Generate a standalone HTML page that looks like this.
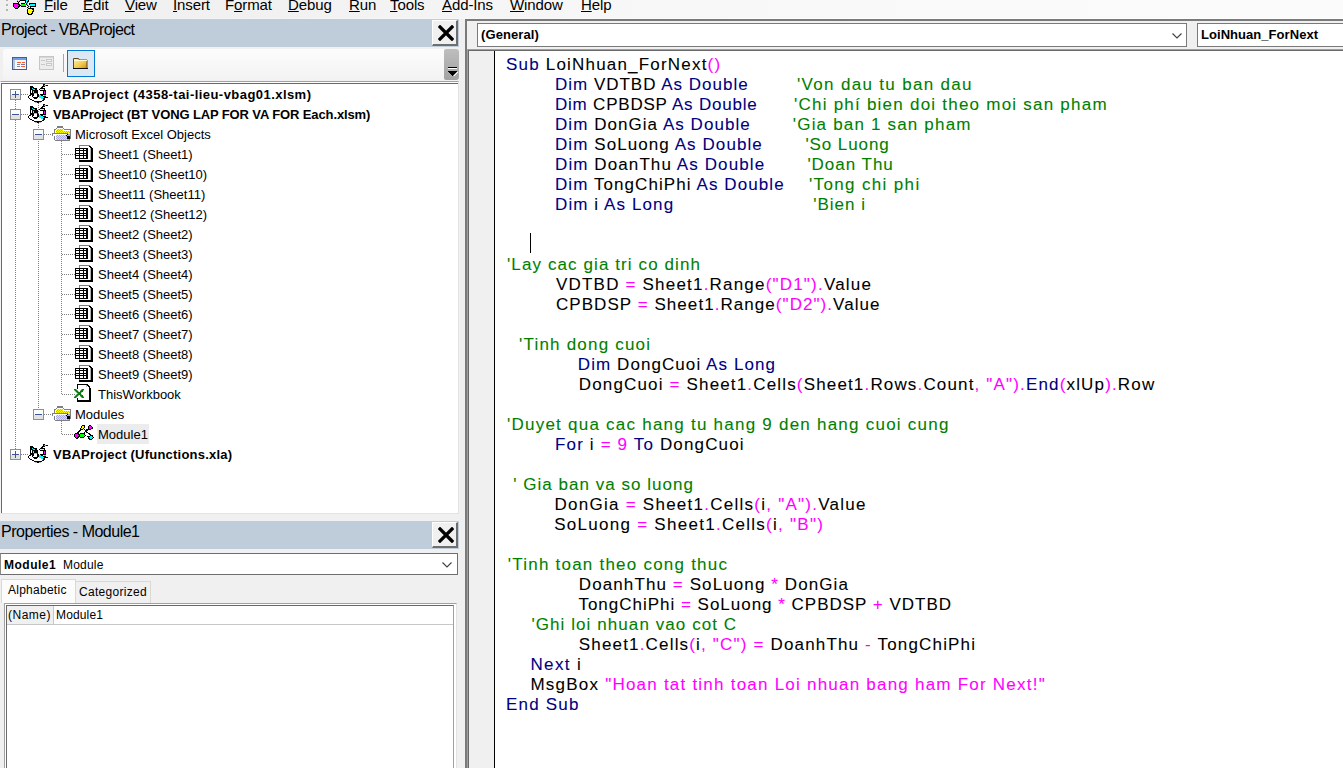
<!DOCTYPE html>
<html><head><meta charset="utf-8">
<style>
*{margin:0;padding:0;box-sizing:border-box}
html,body{width:1343px;height:768px;overflow:hidden;background:#f0f0f0;font-family:"Liberation Sans",sans-serif;color:#000}
.a{position:absolute}
svg{display:block}
.t{position:absolute;white-space:pre;line-height:1}
/* menu */
.mi{position:absolute;top:-4px;font-size:15px;letter-spacing:-0.1px;white-space:pre;line-height:18px}
.mi u{text-decoration:underline;text-decoration-thickness:1px;text-underline-offset:1px}
.cap{position:absolute;background:#bfcddb;left:0;width:459px;height:28px}
.capt{position:absolute;left:1px;font-size:16px;letter-spacing:-0.62px;white-space:pre;line-height:1}
.xbtn{position:absolute;left:432px;width:26px;height:26px;background:#f0f0f0;border-left:1px solid #fff;border-top:1px solid #fff;border-right:2px solid #6f6f6f;border-bottom:2px solid #6f6f6f}
.xbtn svg{position:absolute;left:5px;top:4px}
.r{position:absolute;white-space:pre;font-size:13px;letter-spacing:0;line-height:1}
.r.b{font-weight:bold;font-size:13px;margin-left:1px}
.code{position:absolute;left:0;top:0}
.cl{position:absolute;white-space:pre;font-size:17px;letter-spacing:1.1px;line-height:1;color:#000;-webkit-text-stroke:0.08px currentColor}
.k{color:#000080}
.p{color:#ff00ff}
.c{color:#008000}
</style></head><body>

<!-- MENU BAR -->
<div class="a" style="left:0;top:0;width:1343px;height:18px;background:linear-gradient(90deg,#f0f0f0 0px,#f1f1f1 250px,#f7f7f7 600px,#fafafa 1000px,#fbfbfb 1343px)"></div>
<div class="a" style="left:0;top:18px;width:1343px;height:1px;background:linear-gradient(90deg,#f0f0f0 0px,#f8f8f8 500px,#fff 900px)"></div>
<div class="a" style="left:6px;top:-1px;width:2px;height:2px;background:#b4b4b4"></div>
<div class="a" style="left:6px;top:4px;width:2px;height:2px;background:#b4b4b4"></div>
<div class="a" style="left:6px;top:9px;width:2px;height:2px;background:#b4b4b4"></div>
<svg class="a" style="left:13px;top:0px" width="23" height="15" shape-rendering="crispEdges"><path d="M4 0h1v1h-1zM6 0h1v1h-1zM13 0h2v1h-2zM5 1h1v1h-1zM13 1h1v1h-1zM13 2h1v1h-1zM14 3h1v1h-1zM14 4h1v1h-1zM17 4h5v1h-5zM15 5h1v1h-1zM17 5h5v1h-5zM16 6h1v1h-1zM15 7h1v1h-1z" fill="#00ffff"/><path d="M5 0h1v1h-1zM7 1h5v1h-5zM15 4h1v1h-1zM13 5h1v1h-1zM16 5h1v1h-1zM14 6h1v1h-1zM16 7h1v1h-1z" fill="#fff"/><path d="M7 0h6v1h-6zM15 0h1v1h-1zM4 1h1v1h-1zM6 1h1v1h-1zM12 1h1v1h-1zM14 1h2v1h-2zM5 2h1v1h-1zM12 2h1v1h-1zM14 2h1v1h-1zM0 3h6v1h-6zM8 3h4v1h-4zM13 3h1v1h-1zM16 3h7v1h-7zM0 4h1v1h-1zM5 4h2v1h-2zM13 4h1v1h-1zM16 4h1v1h-1zM22 4h1v1h-1zM0 5h1v1h-1zM6 5h2v1h-2zM14 5h1v1h-1zM22 5h1v1h-1zM0 6h1v1h-1zM5 6h2v1h-2zM8 6h5v1h-5zM15 6h1v1h-1zM17 6h6v1h-6zM1 7h1v1h-1zM5 7h1v1h-1zM14 7h1v1h-1zM17 7h1v1h-1zM2 8h3v1h-3zM15 8h6v1h-6zM14 9h1v1h-1zM19 9h2v1h-2zM14 10h1v1h-1zM20 10h1v1h-1zM14 11h1v1h-1zM19 11h2v1h-2zM14 12h1v1h-1zM19 12h1v1h-1zM14 13h2v1h-2zM18 13h2v1h-2zM15 14h4v1h-4z" fill="#000"/><path d="M1 4h4v1h-4zM1 5h5v1h-5zM1 6h4v1h-4zM2 7h3v1h-3z" fill="#ff00ff"/><path d="M8 4h5v1h-5zM8 5h5v1h-5z" fill="#00ff00"/><path d="M15 9h4v1h-4zM15 10h5v1h-5zM15 11h4v1h-4zM15 12h4v1h-4zM16 13h2v1h-2z" fill="#ffff00"/></svg>
<div class="mi" style="left:44px"><u>F</u>ile</div>
<div class="mi" style="left:83px"><u>E</u>dit</div>
<div class="mi" style="left:125px"><u>V</u>iew</div>
<div class="mi" style="left:173px"><u>I</u>nsert</div>
<div class="mi" style="left:225px">F<u>o</u>rmat</div>
<div class="mi" style="left:288px"><u>D</u>ebug</div>
<div class="mi" style="left:349px"><u>R</u>un</div>
<div class="mi" style="left:390px"><u>T</u>ools</div>
<div class="mi" style="left:442px"><u>A</u>dd-Ins</div>
<div class="mi" style="left:510px"><u>W</u>indow</div>
<div class="mi" style="left:581px"><u>H</u>elp</div>

<!-- PROJECT PANEL -->
<div class="cap" style="top:19px"><div class="capt" style="top:3px">Project - VBAProject</div></div>
<div class="xbtn" style="top:20px"><svg width="16" height="16" viewBox="0 0 16 16"><path d="M2 2L14 14M14 2L2 14" stroke="#000" stroke-width="3.3" stroke-linecap="square"/></svg></div>


<!-- TOOLBAR -->
<div class="a" style="left:3px;top:49px;width:442px;height:31px;border-radius:3px 0 0 3px;background:linear-gradient(#fcfcfc,#f3f3f3)"></div>
<div class="a" style="left:444px;top:49px;width:15px;height:31px;border-radius:2px 3px 3px 2px;background:linear-gradient(#bebebe,#a2a2a2)"></div>
<svg class="a" style="left:447px;top:66px" width="11" height="12" shape-rendering="crispEdges"><rect x="1" y="1" width="9" height="1" fill="#000"/><rect x="1" y="2" width="9" height="1" fill="#fff"/><path d="M0.5 4.5H10.5L5.5 10Z" fill="#000"/><path d="M6 10L10.5 5.5V7L7 10.5Z" fill="#fff"/></svg>
<svg class="a" style="left:12px;top:57px" width="15" height="13" shape-rendering="crispEdges">
<rect x="0" y="0" width="15" height="13" fill="#46608e"/><rect x="1" y="1" width="13" height="2" fill="#6f9fe8"/><rect x="1" y="3" width="2" height="9" fill="#b8c4d8"/><rect x="3" y="3" width="11" height="9" fill="#f4f8ff"/>
<rect x="5" y="5" width="4" height="1" fill="#ff5a2a"/><rect x="10" y="5" width="3" height="1" fill="#ff5a2a"/>
<rect x="5" y="7" width="3" height="1" fill="#7a8aa8"/><rect x="9" y="7" width="4" height="1" fill="#6d7ea5"/>
<rect x="5" y="9" width="3" height="1" fill="#7a8aa8"/><rect x="9" y="9" width="4" height="1" fill="#ff5a2a"/>
</svg>
<svg class="a" style="left:39px;top:56px" width="15" height="14" shape-rendering="crispEdges">
<rect x="0" y="0" width="15" height="14" fill="#c6c6c6"/><rect x="1" y="2" width="13" height="11" fill="#ececec"/><rect x="1" y="1" width="13" height="1" fill="#d8d8d8"/>
<rect x="2" y="4" width="4" height="1" fill="#c8c8c8"/><rect x="7" y="3" width="6" height="3" fill="#c8c8c8"/><rect x="8" y="4" width="4" height="1" fill="#f4f4f4"/>
<rect x="2" y="8" width="4" height="1" fill="#c8c8c8"/><rect x="7" y="7" width="6" height="3" fill="#c8c8c8"/><rect x="8" y="8" width="4" height="1" fill="#f4f4f4"/>
</svg>
<div class="a" style="left:63px;top:54px;width:1px;height:18px;background:#a6a6a6"></div>
<div class="a" style="left:67px;top:50px;width:28px;height:27px;border:1px solid #0078d7;background:#dce8f4"></div>
<svg class="a" style="left:73px;top:57px" width="15" height="12">
<defs><linearGradient id="fg" x1="0" y1="0" x2="1" y2="1"><stop offset="0" stop-color="#fff3b0"/><stop offset="0.6" stop-color="#f0c848"/><stop offset="1" stop-color="#d08a18"/></linearGradient></defs>
<path d="M0.5 1.5h5l1 1.5h7.5v8.5h-13.5z" fill="url(#fg)" stroke="#5a4a2a" stroke-width="1"/><rect x="1" y="3" width="13" height="1" fill="#fff8d0"/><rect x="0" y="11" width="15" height="1" fill="#111"/>
</svg>

<!-- TREE -->

<div class="a" style="left:0;top:81px;width:459px;height:433px;background:#fff;border-top:1px solid #a0a0a0;border-left:1px solid #f4f4f4;border-right:1px solid #e3e3e3;border-bottom:1px solid #e3e3e3"></div>
<div class="a" style="left:1px;top:83px;width:457px;height:430px;border-top:1px solid #696969;border-left:1px solid #696969"></div>
<div class="a" style="left:15px;top:100px;width:1px;height:354px;background:repeating-linear-gradient(180deg,#808080 0 1px,transparent 1px 2px)"></div>
<div class="a" style="left:38px;top:103px;width:1px;height:311px;background:repeating-linear-gradient(180deg,#808080 0 1px,transparent 1px 2px)"></div>
<div class="a" style="left:61px;top:141px;width:1px;height:253px;background:repeating-linear-gradient(180deg,#808080 0 1px,transparent 1px 2px)"></div>
<div class="a" style="left:61px;top:421px;width:1px;height:13px;background:repeating-linear-gradient(180deg,#808080 0 1px,transparent 1px 2px)"></div>
<div class="a" style="left:21px;top:94px;width:7px;height:1px;background:repeating-linear-gradient(90deg,#808080 0 1px,transparent 1px 2px)"></div>
<div class="a" style="left:21px;top:114px;width:7px;height:1px;background:repeating-linear-gradient(90deg,#808080 0 1px,transparent 1px 2px)"></div>
<div class="a" style="left:21px;top:454px;width:7px;height:1px;background:repeating-linear-gradient(90deg,#808080 0 1px,transparent 1px 2px)"></div>
<div class="a" style="left:44px;top:134px;width:8px;height:1px;background:repeating-linear-gradient(90deg,#808080 0 1px,transparent 1px 2px)"></div>
<div class="a" style="left:44px;top:414px;width:8px;height:1px;background:repeating-linear-gradient(90deg,#808080 0 1px,transparent 1px 2px)"></div>
<div class="a" style="left:62px;top:154px;width:13px;height:1px;background:repeating-linear-gradient(90deg,#808080 0 1px,transparent 1px 2px)"></div>
<div class="a" style="left:62px;top:174px;width:13px;height:1px;background:repeating-linear-gradient(90deg,#808080 0 1px,transparent 1px 2px)"></div>
<div class="a" style="left:62px;top:194px;width:13px;height:1px;background:repeating-linear-gradient(90deg,#808080 0 1px,transparent 1px 2px)"></div>
<div class="a" style="left:62px;top:214px;width:13px;height:1px;background:repeating-linear-gradient(90deg,#808080 0 1px,transparent 1px 2px)"></div>
<div class="a" style="left:62px;top:234px;width:13px;height:1px;background:repeating-linear-gradient(90deg,#808080 0 1px,transparent 1px 2px)"></div>
<div class="a" style="left:62px;top:254px;width:13px;height:1px;background:repeating-linear-gradient(90deg,#808080 0 1px,transparent 1px 2px)"></div>
<div class="a" style="left:62px;top:274px;width:13px;height:1px;background:repeating-linear-gradient(90deg,#808080 0 1px,transparent 1px 2px)"></div>
<div class="a" style="left:62px;top:294px;width:13px;height:1px;background:repeating-linear-gradient(90deg,#808080 0 1px,transparent 1px 2px)"></div>
<div class="a" style="left:62px;top:314px;width:13px;height:1px;background:repeating-linear-gradient(90deg,#808080 0 1px,transparent 1px 2px)"></div>
<div class="a" style="left:62px;top:334px;width:13px;height:1px;background:repeating-linear-gradient(90deg,#808080 0 1px,transparent 1px 2px)"></div>
<div class="a" style="left:62px;top:354px;width:13px;height:1px;background:repeating-linear-gradient(90deg,#808080 0 1px,transparent 1px 2px)"></div>
<div class="a" style="left:62px;top:374px;width:13px;height:1px;background:repeating-linear-gradient(90deg,#808080 0 1px,transparent 1px 2px)"></div>
<div class="a" style="left:62px;top:394px;width:13px;height:1px;background:repeating-linear-gradient(90deg,#808080 0 1px,transparent 1px 2px)"></div>
<div class="a" style="left:62px;top:434px;width:13px;height:1px;background:repeating-linear-gradient(90deg,#808080 0 1px,transparent 1px 2px)"></div>
<svg class="a" style="left:10px;top:89px" width="11" height="11" shape-rendering="crispEdges"><rect x="0" y="0" width="11" height="11" rx="1.5" fill="#8f8f8f"/><rect x="1" y="1" width="9" height="5" fill="#fbfbfb"/><rect x="1" y="6" width="9" height="4" fill="#e2e2e2"/><rect x="2" y="5" width="7" height="1" fill="#3b559c"/><rect x="5" y="2" width="1" height="7" fill="#3b559c"/></svg>
<svg class="a" style="left:10px;top:109px" width="11" height="11" shape-rendering="crispEdges"><rect x="0" y="0" width="11" height="11" rx="1.5" fill="#8f8f8f"/><rect x="1" y="1" width="9" height="5" fill="#fbfbfb"/><rect x="1" y="6" width="9" height="4" fill="#e2e2e2"/><rect x="2" y="5" width="7" height="1" fill="#3b559c"/></svg>
<svg class="a" style="left:10px;top:449px" width="11" height="11" shape-rendering="crispEdges"><rect x="0" y="0" width="11" height="11" rx="1.5" fill="#8f8f8f"/><rect x="1" y="1" width="9" height="5" fill="#fbfbfb"/><rect x="1" y="6" width="9" height="4" fill="#e2e2e2"/><rect x="2" y="5" width="7" height="1" fill="#3b559c"/><rect x="5" y="2" width="1" height="7" fill="#3b559c"/></svg>
<svg class="a" style="left:33px;top:129px" width="11" height="11" shape-rendering="crispEdges"><rect x="0" y="0" width="11" height="11" rx="1.5" fill="#8f8f8f"/><rect x="1" y="1" width="9" height="5" fill="#fbfbfb"/><rect x="1" y="6" width="9" height="4" fill="#e2e2e2"/><rect x="2" y="5" width="7" height="1" fill="#3b559c"/></svg>
<svg class="a" style="left:33px;top:409px" width="11" height="11" shape-rendering="crispEdges"><rect x="0" y="0" width="11" height="11" rx="1.5" fill="#8f8f8f"/><rect x="1" y="1" width="9" height="5" fill="#fbfbfb"/><rect x="1" y="6" width="9" height="4" fill="#e2e2e2"/><rect x="2" y="5" width="7" height="1" fill="#3b559c"/></svg>
<svg class="a" style="left:28px;top:84px" width="20" height="19" shape-rendering="crispEdges"><path d="M15 0h2v1h-2zM15 1h1v1h-1zM18 1h2v1h-2zM2 2h3v1h-3zM14 2h3v1h-3zM2 3h4v1h-4zM13 3h2v1h-2zM2 4h2v1h-2zM5 4h4v1h-4zM12 4h5v1h-5zM2 5h3v1h-3zM7 5h2v1h-2zM11 5h1v1h-1zM16 5h1v1h-1zM2 6h1v1h-1zM4 6h6v1h-6zM12 6h6v1h-6zM2 7h1v1h-1zM4 7h1v1h-1zM6 7h4v1h-4zM15 7h1v1h-1zM17 7h1v1h-1zM2 8h1v1h-1zM4 8h1v1h-1zM6 8h4v1h-4zM15 8h1v1h-1zM17 8h1v1h-1zM2 9h4v1h-4zM9 9h1v1h-1zM15 9h1v1h-1zM17 9h1v1h-1zM2 10h4v1h-4zM9 10h2v1h-2zM12 10h6v1h-6zM1 11h2v1h-2zM4 11h2v1h-2zM9 11h2v1h-2zM13 11h2v1h-2zM0 12h1v1h-1zM4 12h1v1h-1zM9 12h2v1h-2zM15 12h3v1h-3zM0 13h1v1h-1zM5 13h5v1h-5zM16 13h4v1h-4zM1 14h1v1h-1zM6 14h3v1h-3zM15 14h2v1h-2zM2 15h2v1h-2zM15 15h2v1h-2zM4 16h2v1h-2zM14 16h2v1h-2zM6 17h8v1h-8zM9 18h2v1h-2z" fill="#000"/><path d="M16 1h2v1h-2z" fill="#00ff00"/><path d="M4 4h1v1h-1zM5 5h2v1h-2zM5 7h1v1h-1zM5 8h1v1h-1zM6 9h3v1h-3zM11 11h2v1h-2zM11 12h4v1h-4zM11 13h5v1h-5zM13 14h2v1h-2z" fill="#00ffff"/><path d="M12 5h4v1h-4z" fill="#ffff00"/><path d="M3 6h1v1h-1zM3 7h1v1h-1zM12 7h3v1h-3zM3 8h1v1h-1zM12 8h3v1h-3zM12 9h3v1h-3zM6 10h3v1h-3zM3 11h1v1h-1zM6 11h3v1h-3zM1 12h3v1h-3zM5 12h4v1h-4zM1 13h4v1h-4zM10 13h1v1h-1zM2 14h4v1h-4zM9 14h4v1h-4zM4 15h11v1h-11zM6 16h8v1h-8z" fill="#fff"/><path d="M16 7h1v1h-1zM16 8h1v1h-1zM16 9h1v1h-1z" fill="#ff00ff"/><path d="M16 11h2v1h-2zM7 18h2v1h-2zM11 18h2v1h-2z" fill="#b4b4b4"/></svg>
<svg class="a" style="left:28px;top:104px" width="20" height="19" shape-rendering="crispEdges"><path d="M15 0h2v1h-2zM15 1h1v1h-1zM18 1h2v1h-2zM2 2h3v1h-3zM14 2h3v1h-3zM2 3h4v1h-4zM13 3h2v1h-2zM2 4h2v1h-2zM5 4h4v1h-4zM12 4h5v1h-5zM2 5h3v1h-3zM7 5h2v1h-2zM11 5h1v1h-1zM16 5h1v1h-1zM2 6h1v1h-1zM4 6h6v1h-6zM12 6h6v1h-6zM2 7h1v1h-1zM4 7h1v1h-1zM6 7h4v1h-4zM15 7h1v1h-1zM17 7h1v1h-1zM2 8h1v1h-1zM4 8h1v1h-1zM6 8h4v1h-4zM15 8h1v1h-1zM17 8h1v1h-1zM2 9h4v1h-4zM9 9h1v1h-1zM15 9h1v1h-1zM17 9h1v1h-1zM2 10h4v1h-4zM9 10h2v1h-2zM12 10h6v1h-6zM1 11h2v1h-2zM4 11h2v1h-2zM9 11h2v1h-2zM13 11h2v1h-2zM0 12h1v1h-1zM4 12h1v1h-1zM9 12h2v1h-2zM15 12h3v1h-3zM0 13h1v1h-1zM5 13h5v1h-5zM16 13h4v1h-4zM1 14h1v1h-1zM6 14h3v1h-3zM15 14h2v1h-2zM2 15h2v1h-2zM15 15h2v1h-2zM4 16h2v1h-2zM14 16h2v1h-2zM6 17h8v1h-8zM9 18h2v1h-2z" fill="#000"/><path d="M16 1h2v1h-2z" fill="#00ff00"/><path d="M4 4h1v1h-1zM5 5h2v1h-2zM5 7h1v1h-1zM5 8h1v1h-1zM6 9h3v1h-3zM11 11h2v1h-2zM11 12h4v1h-4zM11 13h5v1h-5zM13 14h2v1h-2z" fill="#00ffff"/><path d="M12 5h4v1h-4z" fill="#ffff00"/><path d="M3 6h1v1h-1zM3 7h1v1h-1zM12 7h3v1h-3zM3 8h1v1h-1zM12 8h3v1h-3zM12 9h3v1h-3zM6 10h3v1h-3zM3 11h1v1h-1zM6 11h3v1h-3zM1 12h3v1h-3zM5 12h4v1h-4zM1 13h4v1h-4zM10 13h1v1h-1zM2 14h4v1h-4zM9 14h4v1h-4zM4 15h11v1h-11zM6 16h8v1h-8z" fill="#fff"/><path d="M16 7h1v1h-1zM16 8h1v1h-1zM16 9h1v1h-1z" fill="#ff00ff"/><path d="M16 11h2v1h-2zM7 18h2v1h-2zM11 18h2v1h-2z" fill="#b4b4b4"/></svg>
<svg class="a" style="left:28px;top:444px" width="20" height="19" shape-rendering="crispEdges"><path d="M15 0h2v1h-2zM15 1h1v1h-1zM18 1h2v1h-2zM2 2h3v1h-3zM14 2h3v1h-3zM2 3h4v1h-4zM13 3h2v1h-2zM2 4h2v1h-2zM5 4h4v1h-4zM12 4h5v1h-5zM2 5h3v1h-3zM7 5h2v1h-2zM11 5h1v1h-1zM16 5h1v1h-1zM2 6h1v1h-1zM4 6h6v1h-6zM12 6h6v1h-6zM2 7h1v1h-1zM4 7h1v1h-1zM6 7h4v1h-4zM15 7h1v1h-1zM17 7h1v1h-1zM2 8h1v1h-1zM4 8h1v1h-1zM6 8h4v1h-4zM15 8h1v1h-1zM17 8h1v1h-1zM2 9h4v1h-4zM9 9h1v1h-1zM15 9h1v1h-1zM17 9h1v1h-1zM2 10h4v1h-4zM9 10h2v1h-2zM12 10h6v1h-6zM1 11h2v1h-2zM4 11h2v1h-2zM9 11h2v1h-2zM13 11h2v1h-2zM0 12h1v1h-1zM4 12h1v1h-1zM9 12h2v1h-2zM15 12h3v1h-3zM0 13h1v1h-1zM5 13h5v1h-5zM16 13h4v1h-4zM1 14h1v1h-1zM6 14h3v1h-3zM15 14h2v1h-2zM2 15h2v1h-2zM15 15h2v1h-2zM4 16h2v1h-2zM14 16h2v1h-2zM6 17h8v1h-8zM9 18h2v1h-2z" fill="#000"/><path d="M16 1h2v1h-2z" fill="#00ff00"/><path d="M4 4h1v1h-1zM5 5h2v1h-2zM5 7h1v1h-1zM5 8h1v1h-1zM6 9h3v1h-3zM11 11h2v1h-2zM11 12h4v1h-4zM11 13h5v1h-5zM13 14h2v1h-2z" fill="#00ffff"/><path d="M12 5h4v1h-4z" fill="#ffff00"/><path d="M3 6h1v1h-1zM3 7h1v1h-1zM12 7h3v1h-3zM3 8h1v1h-1zM12 8h3v1h-3zM12 9h3v1h-3zM6 10h3v1h-3zM3 11h1v1h-1zM6 11h3v1h-3zM1 12h3v1h-3zM5 12h4v1h-4zM1 13h4v1h-4zM10 13h1v1h-1zM2 14h4v1h-4zM9 14h4v1h-4zM4 15h11v1h-11zM6 16h8v1h-8z" fill="#fff"/><path d="M16 7h1v1h-1zM16 8h1v1h-1zM16 9h1v1h-1z" fill="#ff00ff"/><path d="M16 11h2v1h-2zM7 18h2v1h-2zM11 18h2v1h-2z" fill="#b4b4b4"/></svg>
<svg class="a" style="left:52px;top:126px" width="19" height="15" shape-rendering="crispEdges"><path d="M5 0h6v1h-6zM5 1h6v1h-6zM4 2h1v1h-1zM11 2h1v1h-1zM2 3h2v1h-2zM12 3h7v1h-7zM2 4h1v1h-1zM18 4h1v1h-1zM2 5h1v1h-1zM18 5h1v1h-1zM2 6h1v1h-1zM18 6h1v1h-1zM0 7h16v1h-16zM18 7h1v1h-1zM0 8h1v1h-1zM18 8h1v1h-1zM0 9h1v1h-1zM18 9h1v1h-1zM2 10h1v1h-1zM18 10h1v1h-1zM2 11h1v1h-1zM18 11h1v1h-1zM2 12h1v1h-1zM18 12h1v1h-1zM2 13h1v1h-1zM17 13h1v1h-1zM3 14h15v1h-15z" fill="#808080"/><path d="M5 2h6v1h-6zM4 3h1v1h-1zM11 3h1v1h-1zM3 4h1v1h-1zM11 4h7v1h-7zM3 5h1v1h-1zM3 6h1v1h-1zM1 8h14v1h-14zM1 9h3v1h-3zM3 10h1v1h-1zM3 11h1v1h-1zM3 12h1v1h-1zM3 13h1v1h-1z" fill="#fff"/><path d="M5 3h1v1h-1zM7 3h1v1h-1zM9 3h1v1h-1zM4 4h1v1h-1zM6 4h1v1h-1zM8 4h1v1h-1zM10 4h1v1h-1zM5 5h1v1h-1zM7 5h1v1h-1zM9 5h1v1h-1zM11 5h1v1h-1zM13 5h1v1h-1zM15 5h1v1h-1zM17 5h1v1h-1zM4 6h1v1h-1zM6 6h1v1h-1zM8 6h1v1h-1zM10 6h1v1h-1zM12 6h1v1h-1zM14 6h1v1h-1zM16 6h1v1h-1zM16 7h2v1h-2zM4 9h1v1h-1zM6 9h1v1h-1zM8 9h1v1h-1zM10 9h1v1h-1zM12 9h1v1h-1zM5 10h1v1h-1zM7 10h1v1h-1zM9 10h1v1h-1zM11 10h1v1h-1zM13 10h1v1h-1zM4 11h1v1h-1zM6 11h1v1h-1zM8 11h1v1h-1zM10 11h1v1h-1zM12 11h1v1h-1zM14 11h1v1h-1zM5 12h1v1h-1zM7 12h1v1h-1zM9 12h1v1h-1zM11 12h1v1h-1zM13 12h1v1h-1zM4 13h1v1h-1zM6 13h1v1h-1zM8 13h1v1h-1zM10 13h1v1h-1zM12 13h1v1h-1zM14 13h1v1h-1z" fill="#ffff00"/><path d="M6 3h1v1h-1zM8 3h1v1h-1zM10 3h1v1h-1zM5 4h1v1h-1zM7 4h1v1h-1zM9 4h1v1h-1zM4 5h1v1h-1zM6 5h1v1h-1zM8 5h1v1h-1zM10 5h1v1h-1zM12 5h1v1h-1zM14 5h1v1h-1zM16 5h1v1h-1zM5 6h1v1h-1zM7 6h1v1h-1zM9 6h1v1h-1zM11 6h1v1h-1zM13 6h1v1h-1zM15 6h1v1h-1zM17 6h1v1h-1zM16 8h2v1h-2zM5 9h1v1h-1zM7 9h1v1h-1zM9 9h1v1h-1zM11 9h1v1h-1zM13 9h1v1h-1zM15 9h3v1h-3zM4 10h1v1h-1zM6 10h1v1h-1zM8 10h1v1h-1zM10 10h1v1h-1zM12 10h1v1h-1zM14 10h1v1h-1zM5 11h1v1h-1zM7 11h1v1h-1zM9 11h1v1h-1zM11 11h1v1h-1zM13 11h1v1h-1zM4 12h1v1h-1zM6 12h1v1h-1zM8 12h1v1h-1zM10 12h1v1h-1zM12 12h1v1h-1zM14 12h1v1h-1zM5 13h1v1h-1zM7 13h1v1h-1zM9 13h1v1h-1zM11 13h1v1h-1zM13 13h1v1h-1zM15 13h1v1h-1z" fill="#a8a8e8"/><path d="M15 8h1v1h-1zM14 9h1v1h-1zM15 10h3v1h-3zM15 11h3v1h-3zM15 12h3v1h-3z" fill="#000"/><path d="M16 13h1v1h-1z" fill="#b4b4b4"/></svg>
<svg class="a" style="left:52px;top:406px" width="19" height="15" shape-rendering="crispEdges"><path d="M5 0h6v1h-6zM5 1h6v1h-6zM4 2h1v1h-1zM11 2h1v1h-1zM2 3h2v1h-2zM12 3h7v1h-7zM2 4h1v1h-1zM18 4h1v1h-1zM2 5h1v1h-1zM18 5h1v1h-1zM2 6h1v1h-1zM18 6h1v1h-1zM0 7h16v1h-16zM18 7h1v1h-1zM0 8h1v1h-1zM18 8h1v1h-1zM0 9h1v1h-1zM18 9h1v1h-1zM2 10h1v1h-1zM18 10h1v1h-1zM2 11h1v1h-1zM18 11h1v1h-1zM2 12h1v1h-1zM18 12h1v1h-1zM2 13h1v1h-1zM17 13h1v1h-1zM3 14h15v1h-15z" fill="#808080"/><path d="M5 2h6v1h-6zM4 3h1v1h-1zM11 3h1v1h-1zM3 4h1v1h-1zM11 4h7v1h-7zM3 5h1v1h-1zM3 6h1v1h-1zM1 8h14v1h-14zM1 9h3v1h-3zM3 10h1v1h-1zM3 11h1v1h-1zM3 12h1v1h-1zM3 13h1v1h-1z" fill="#fff"/><path d="M5 3h1v1h-1zM7 3h1v1h-1zM9 3h1v1h-1zM4 4h1v1h-1zM6 4h1v1h-1zM8 4h1v1h-1zM10 4h1v1h-1zM5 5h1v1h-1zM7 5h1v1h-1zM9 5h1v1h-1zM11 5h1v1h-1zM13 5h1v1h-1zM15 5h1v1h-1zM17 5h1v1h-1zM4 6h1v1h-1zM6 6h1v1h-1zM8 6h1v1h-1zM10 6h1v1h-1zM12 6h1v1h-1zM14 6h1v1h-1zM16 6h1v1h-1zM16 7h2v1h-2zM4 9h1v1h-1zM6 9h1v1h-1zM8 9h1v1h-1zM10 9h1v1h-1zM12 9h1v1h-1zM5 10h1v1h-1zM7 10h1v1h-1zM9 10h1v1h-1zM11 10h1v1h-1zM13 10h1v1h-1zM4 11h1v1h-1zM6 11h1v1h-1zM8 11h1v1h-1zM10 11h1v1h-1zM12 11h1v1h-1zM14 11h1v1h-1zM5 12h1v1h-1zM7 12h1v1h-1zM9 12h1v1h-1zM11 12h1v1h-1zM13 12h1v1h-1zM4 13h1v1h-1zM6 13h1v1h-1zM8 13h1v1h-1zM10 13h1v1h-1zM12 13h1v1h-1zM14 13h1v1h-1z" fill="#ffff00"/><path d="M6 3h1v1h-1zM8 3h1v1h-1zM10 3h1v1h-1zM5 4h1v1h-1zM7 4h1v1h-1zM9 4h1v1h-1zM4 5h1v1h-1zM6 5h1v1h-1zM8 5h1v1h-1zM10 5h1v1h-1zM12 5h1v1h-1zM14 5h1v1h-1zM16 5h1v1h-1zM5 6h1v1h-1zM7 6h1v1h-1zM9 6h1v1h-1zM11 6h1v1h-1zM13 6h1v1h-1zM15 6h1v1h-1zM17 6h1v1h-1zM16 8h2v1h-2zM5 9h1v1h-1zM7 9h1v1h-1zM9 9h1v1h-1zM11 9h1v1h-1zM13 9h1v1h-1zM15 9h3v1h-3zM4 10h1v1h-1zM6 10h1v1h-1zM8 10h1v1h-1zM10 10h1v1h-1zM12 10h1v1h-1zM14 10h1v1h-1zM5 11h1v1h-1zM7 11h1v1h-1zM9 11h1v1h-1zM11 11h1v1h-1zM13 11h1v1h-1zM4 12h1v1h-1zM6 12h1v1h-1zM8 12h1v1h-1zM10 12h1v1h-1zM12 12h1v1h-1zM14 12h1v1h-1zM5 13h1v1h-1zM7 13h1v1h-1zM9 13h1v1h-1zM11 13h1v1h-1zM13 13h1v1h-1zM15 13h1v1h-1z" fill="#a8a8e8"/><path d="M15 8h1v1h-1zM14 9h1v1h-1zM15 10h3v1h-3zM15 11h3v1h-3zM15 12h3v1h-3z" fill="#000"/><path d="M16 13h1v1h-1z" fill="#b4b4b4"/></svg>
<svg class="a" style="left:75px;top:145px" width="19" height="17" shape-rendering="crispEdges"><path d="M4 0h11v1h-11zM4 1h1v1h-1zM4 2h1v1h-1zM4 14h1v1h-1z" fill="#808080"/><path d="M5 1h9v1h-9zM5 2h10v1h-10zM13 3h2v1h-2zM1 4h3v1h-3zM5 4h3v1h-3zM9 4h2v1h-2zM13 4h2v1h-2zM13 5h2v1h-2zM1 6h3v1h-3zM5 6h3v1h-3zM9 6h2v1h-2zM13 6h2v1h-2zM1 7h3v1h-3zM5 7h3v1h-3zM9 7h2v1h-2zM13 7h2v1h-2zM13 8h2v1h-2zM1 9h3v1h-3zM5 9h3v1h-3zM9 9h2v1h-2zM13 9h2v1h-2zM13 10h2v1h-2zM1 11h3v1h-3zM5 11h3v1h-3zM9 11h2v1h-2zM13 11h2v1h-2zM1 12h3v1h-3zM5 12h3v1h-3zM9 12h2v1h-2zM13 12h2v1h-2zM13 13h2v1h-2zM5 14h10v1h-10z" fill="#fff"/><path d="M14 1h2v1h-2zM15 2h2v1h-2zM0 3h13v1h-13zM16 3h2v1h-2zM0 4h1v1h-1zM4 4h1v1h-1zM8 4h1v1h-1zM11 4h2v1h-2zM16 4h2v1h-2zM0 5h13v1h-13zM16 5h2v1h-2zM0 6h1v1h-1zM4 6h1v1h-1zM8 6h1v1h-1zM11 6h2v1h-2zM16 6h2v1h-2zM0 7h1v1h-1zM4 7h1v1h-1zM8 7h1v1h-1zM11 7h2v1h-2zM16 7h2v1h-2zM0 8h13v1h-13zM16 8h2v1h-2zM0 9h1v1h-1zM4 9h1v1h-1zM8 9h1v1h-1zM11 9h2v1h-2zM16 9h2v1h-2zM0 10h13v1h-13zM16 10h2v1h-2zM0 11h1v1h-1zM4 11h1v1h-1zM8 11h1v1h-1zM11 11h2v1h-2zM16 11h2v1h-2zM0 12h1v1h-1zM4 12h1v1h-1zM8 12h1v1h-1zM11 12h2v1h-2zM16 12h2v1h-2zM0 13h13v1h-13zM16 13h2v1h-2zM16 14h2v1h-2zM4 15h14v1h-14zM4 16h14v1h-14z" fill="#000"/><path d="M15 3h1v1h-1zM15 4h1v1h-1zM15 5h1v1h-1zM15 6h1v1h-1zM15 7h1v1h-1zM15 8h1v1h-1zM15 9h1v1h-1zM15 10h1v1h-1zM15 11h1v1h-1zM15 12h1v1h-1zM15 13h1v1h-1zM15 14h1v1h-1z" fill="#b4b4b4"/></svg>
<svg class="a" style="left:75px;top:165px" width="19" height="17" shape-rendering="crispEdges"><path d="M4 0h11v1h-11zM4 1h1v1h-1zM4 2h1v1h-1zM4 14h1v1h-1z" fill="#808080"/><path d="M5 1h9v1h-9zM5 2h10v1h-10zM13 3h2v1h-2zM1 4h3v1h-3zM5 4h3v1h-3zM9 4h2v1h-2zM13 4h2v1h-2zM13 5h2v1h-2zM1 6h3v1h-3zM5 6h3v1h-3zM9 6h2v1h-2zM13 6h2v1h-2zM1 7h3v1h-3zM5 7h3v1h-3zM9 7h2v1h-2zM13 7h2v1h-2zM13 8h2v1h-2zM1 9h3v1h-3zM5 9h3v1h-3zM9 9h2v1h-2zM13 9h2v1h-2zM13 10h2v1h-2zM1 11h3v1h-3zM5 11h3v1h-3zM9 11h2v1h-2zM13 11h2v1h-2zM1 12h3v1h-3zM5 12h3v1h-3zM9 12h2v1h-2zM13 12h2v1h-2zM13 13h2v1h-2zM5 14h10v1h-10z" fill="#fff"/><path d="M14 1h2v1h-2zM15 2h2v1h-2zM0 3h13v1h-13zM16 3h2v1h-2zM0 4h1v1h-1zM4 4h1v1h-1zM8 4h1v1h-1zM11 4h2v1h-2zM16 4h2v1h-2zM0 5h13v1h-13zM16 5h2v1h-2zM0 6h1v1h-1zM4 6h1v1h-1zM8 6h1v1h-1zM11 6h2v1h-2zM16 6h2v1h-2zM0 7h1v1h-1zM4 7h1v1h-1zM8 7h1v1h-1zM11 7h2v1h-2zM16 7h2v1h-2zM0 8h13v1h-13zM16 8h2v1h-2zM0 9h1v1h-1zM4 9h1v1h-1zM8 9h1v1h-1zM11 9h2v1h-2zM16 9h2v1h-2zM0 10h13v1h-13zM16 10h2v1h-2zM0 11h1v1h-1zM4 11h1v1h-1zM8 11h1v1h-1zM11 11h2v1h-2zM16 11h2v1h-2zM0 12h1v1h-1zM4 12h1v1h-1zM8 12h1v1h-1zM11 12h2v1h-2zM16 12h2v1h-2zM0 13h13v1h-13zM16 13h2v1h-2zM16 14h2v1h-2zM4 15h14v1h-14zM4 16h14v1h-14z" fill="#000"/><path d="M15 3h1v1h-1zM15 4h1v1h-1zM15 5h1v1h-1zM15 6h1v1h-1zM15 7h1v1h-1zM15 8h1v1h-1zM15 9h1v1h-1zM15 10h1v1h-1zM15 11h1v1h-1zM15 12h1v1h-1zM15 13h1v1h-1zM15 14h1v1h-1z" fill="#b4b4b4"/></svg>
<svg class="a" style="left:75px;top:185px" width="19" height="17" shape-rendering="crispEdges"><path d="M4 0h11v1h-11zM4 1h1v1h-1zM4 2h1v1h-1zM4 14h1v1h-1z" fill="#808080"/><path d="M5 1h9v1h-9zM5 2h10v1h-10zM13 3h2v1h-2zM1 4h3v1h-3zM5 4h3v1h-3zM9 4h2v1h-2zM13 4h2v1h-2zM13 5h2v1h-2zM1 6h3v1h-3zM5 6h3v1h-3zM9 6h2v1h-2zM13 6h2v1h-2zM1 7h3v1h-3zM5 7h3v1h-3zM9 7h2v1h-2zM13 7h2v1h-2zM13 8h2v1h-2zM1 9h3v1h-3zM5 9h3v1h-3zM9 9h2v1h-2zM13 9h2v1h-2zM13 10h2v1h-2zM1 11h3v1h-3zM5 11h3v1h-3zM9 11h2v1h-2zM13 11h2v1h-2zM1 12h3v1h-3zM5 12h3v1h-3zM9 12h2v1h-2zM13 12h2v1h-2zM13 13h2v1h-2zM5 14h10v1h-10z" fill="#fff"/><path d="M14 1h2v1h-2zM15 2h2v1h-2zM0 3h13v1h-13zM16 3h2v1h-2zM0 4h1v1h-1zM4 4h1v1h-1zM8 4h1v1h-1zM11 4h2v1h-2zM16 4h2v1h-2zM0 5h13v1h-13zM16 5h2v1h-2zM0 6h1v1h-1zM4 6h1v1h-1zM8 6h1v1h-1zM11 6h2v1h-2zM16 6h2v1h-2zM0 7h1v1h-1zM4 7h1v1h-1zM8 7h1v1h-1zM11 7h2v1h-2zM16 7h2v1h-2zM0 8h13v1h-13zM16 8h2v1h-2zM0 9h1v1h-1zM4 9h1v1h-1zM8 9h1v1h-1zM11 9h2v1h-2zM16 9h2v1h-2zM0 10h13v1h-13zM16 10h2v1h-2zM0 11h1v1h-1zM4 11h1v1h-1zM8 11h1v1h-1zM11 11h2v1h-2zM16 11h2v1h-2zM0 12h1v1h-1zM4 12h1v1h-1zM8 12h1v1h-1zM11 12h2v1h-2zM16 12h2v1h-2zM0 13h13v1h-13zM16 13h2v1h-2zM16 14h2v1h-2zM4 15h14v1h-14zM4 16h14v1h-14z" fill="#000"/><path d="M15 3h1v1h-1zM15 4h1v1h-1zM15 5h1v1h-1zM15 6h1v1h-1zM15 7h1v1h-1zM15 8h1v1h-1zM15 9h1v1h-1zM15 10h1v1h-1zM15 11h1v1h-1zM15 12h1v1h-1zM15 13h1v1h-1zM15 14h1v1h-1z" fill="#b4b4b4"/></svg>
<svg class="a" style="left:75px;top:205px" width="19" height="17" shape-rendering="crispEdges"><path d="M4 0h11v1h-11zM4 1h1v1h-1zM4 2h1v1h-1zM4 14h1v1h-1z" fill="#808080"/><path d="M5 1h9v1h-9zM5 2h10v1h-10zM13 3h2v1h-2zM1 4h3v1h-3zM5 4h3v1h-3zM9 4h2v1h-2zM13 4h2v1h-2zM13 5h2v1h-2zM1 6h3v1h-3zM5 6h3v1h-3zM9 6h2v1h-2zM13 6h2v1h-2zM1 7h3v1h-3zM5 7h3v1h-3zM9 7h2v1h-2zM13 7h2v1h-2zM13 8h2v1h-2zM1 9h3v1h-3zM5 9h3v1h-3zM9 9h2v1h-2zM13 9h2v1h-2zM13 10h2v1h-2zM1 11h3v1h-3zM5 11h3v1h-3zM9 11h2v1h-2zM13 11h2v1h-2zM1 12h3v1h-3zM5 12h3v1h-3zM9 12h2v1h-2zM13 12h2v1h-2zM13 13h2v1h-2zM5 14h10v1h-10z" fill="#fff"/><path d="M14 1h2v1h-2zM15 2h2v1h-2zM0 3h13v1h-13zM16 3h2v1h-2zM0 4h1v1h-1zM4 4h1v1h-1zM8 4h1v1h-1zM11 4h2v1h-2zM16 4h2v1h-2zM0 5h13v1h-13zM16 5h2v1h-2zM0 6h1v1h-1zM4 6h1v1h-1zM8 6h1v1h-1zM11 6h2v1h-2zM16 6h2v1h-2zM0 7h1v1h-1zM4 7h1v1h-1zM8 7h1v1h-1zM11 7h2v1h-2zM16 7h2v1h-2zM0 8h13v1h-13zM16 8h2v1h-2zM0 9h1v1h-1zM4 9h1v1h-1zM8 9h1v1h-1zM11 9h2v1h-2zM16 9h2v1h-2zM0 10h13v1h-13zM16 10h2v1h-2zM0 11h1v1h-1zM4 11h1v1h-1zM8 11h1v1h-1zM11 11h2v1h-2zM16 11h2v1h-2zM0 12h1v1h-1zM4 12h1v1h-1zM8 12h1v1h-1zM11 12h2v1h-2zM16 12h2v1h-2zM0 13h13v1h-13zM16 13h2v1h-2zM16 14h2v1h-2zM4 15h14v1h-14zM4 16h14v1h-14z" fill="#000"/><path d="M15 3h1v1h-1zM15 4h1v1h-1zM15 5h1v1h-1zM15 6h1v1h-1zM15 7h1v1h-1zM15 8h1v1h-1zM15 9h1v1h-1zM15 10h1v1h-1zM15 11h1v1h-1zM15 12h1v1h-1zM15 13h1v1h-1zM15 14h1v1h-1z" fill="#b4b4b4"/></svg>
<svg class="a" style="left:75px;top:225px" width="19" height="17" shape-rendering="crispEdges"><path d="M4 0h11v1h-11zM4 1h1v1h-1zM4 2h1v1h-1zM4 14h1v1h-1z" fill="#808080"/><path d="M5 1h9v1h-9zM5 2h10v1h-10zM13 3h2v1h-2zM1 4h3v1h-3zM5 4h3v1h-3zM9 4h2v1h-2zM13 4h2v1h-2zM13 5h2v1h-2zM1 6h3v1h-3zM5 6h3v1h-3zM9 6h2v1h-2zM13 6h2v1h-2zM1 7h3v1h-3zM5 7h3v1h-3zM9 7h2v1h-2zM13 7h2v1h-2zM13 8h2v1h-2zM1 9h3v1h-3zM5 9h3v1h-3zM9 9h2v1h-2zM13 9h2v1h-2zM13 10h2v1h-2zM1 11h3v1h-3zM5 11h3v1h-3zM9 11h2v1h-2zM13 11h2v1h-2zM1 12h3v1h-3zM5 12h3v1h-3zM9 12h2v1h-2zM13 12h2v1h-2zM13 13h2v1h-2zM5 14h10v1h-10z" fill="#fff"/><path d="M14 1h2v1h-2zM15 2h2v1h-2zM0 3h13v1h-13zM16 3h2v1h-2zM0 4h1v1h-1zM4 4h1v1h-1zM8 4h1v1h-1zM11 4h2v1h-2zM16 4h2v1h-2zM0 5h13v1h-13zM16 5h2v1h-2zM0 6h1v1h-1zM4 6h1v1h-1zM8 6h1v1h-1zM11 6h2v1h-2zM16 6h2v1h-2zM0 7h1v1h-1zM4 7h1v1h-1zM8 7h1v1h-1zM11 7h2v1h-2zM16 7h2v1h-2zM0 8h13v1h-13zM16 8h2v1h-2zM0 9h1v1h-1zM4 9h1v1h-1zM8 9h1v1h-1zM11 9h2v1h-2zM16 9h2v1h-2zM0 10h13v1h-13zM16 10h2v1h-2zM0 11h1v1h-1zM4 11h1v1h-1zM8 11h1v1h-1zM11 11h2v1h-2zM16 11h2v1h-2zM0 12h1v1h-1zM4 12h1v1h-1zM8 12h1v1h-1zM11 12h2v1h-2zM16 12h2v1h-2zM0 13h13v1h-13zM16 13h2v1h-2zM16 14h2v1h-2zM4 15h14v1h-14zM4 16h14v1h-14z" fill="#000"/><path d="M15 3h1v1h-1zM15 4h1v1h-1zM15 5h1v1h-1zM15 6h1v1h-1zM15 7h1v1h-1zM15 8h1v1h-1zM15 9h1v1h-1zM15 10h1v1h-1zM15 11h1v1h-1zM15 12h1v1h-1zM15 13h1v1h-1zM15 14h1v1h-1z" fill="#b4b4b4"/></svg>
<svg class="a" style="left:75px;top:245px" width="19" height="17" shape-rendering="crispEdges"><path d="M4 0h11v1h-11zM4 1h1v1h-1zM4 2h1v1h-1zM4 14h1v1h-1z" fill="#808080"/><path d="M5 1h9v1h-9zM5 2h10v1h-10zM13 3h2v1h-2zM1 4h3v1h-3zM5 4h3v1h-3zM9 4h2v1h-2zM13 4h2v1h-2zM13 5h2v1h-2zM1 6h3v1h-3zM5 6h3v1h-3zM9 6h2v1h-2zM13 6h2v1h-2zM1 7h3v1h-3zM5 7h3v1h-3zM9 7h2v1h-2zM13 7h2v1h-2zM13 8h2v1h-2zM1 9h3v1h-3zM5 9h3v1h-3zM9 9h2v1h-2zM13 9h2v1h-2zM13 10h2v1h-2zM1 11h3v1h-3zM5 11h3v1h-3zM9 11h2v1h-2zM13 11h2v1h-2zM1 12h3v1h-3zM5 12h3v1h-3zM9 12h2v1h-2zM13 12h2v1h-2zM13 13h2v1h-2zM5 14h10v1h-10z" fill="#fff"/><path d="M14 1h2v1h-2zM15 2h2v1h-2zM0 3h13v1h-13zM16 3h2v1h-2zM0 4h1v1h-1zM4 4h1v1h-1zM8 4h1v1h-1zM11 4h2v1h-2zM16 4h2v1h-2zM0 5h13v1h-13zM16 5h2v1h-2zM0 6h1v1h-1zM4 6h1v1h-1zM8 6h1v1h-1zM11 6h2v1h-2zM16 6h2v1h-2zM0 7h1v1h-1zM4 7h1v1h-1zM8 7h1v1h-1zM11 7h2v1h-2zM16 7h2v1h-2zM0 8h13v1h-13zM16 8h2v1h-2zM0 9h1v1h-1zM4 9h1v1h-1zM8 9h1v1h-1zM11 9h2v1h-2zM16 9h2v1h-2zM0 10h13v1h-13zM16 10h2v1h-2zM0 11h1v1h-1zM4 11h1v1h-1zM8 11h1v1h-1zM11 11h2v1h-2zM16 11h2v1h-2zM0 12h1v1h-1zM4 12h1v1h-1zM8 12h1v1h-1zM11 12h2v1h-2zM16 12h2v1h-2zM0 13h13v1h-13zM16 13h2v1h-2zM16 14h2v1h-2zM4 15h14v1h-14zM4 16h14v1h-14z" fill="#000"/><path d="M15 3h1v1h-1zM15 4h1v1h-1zM15 5h1v1h-1zM15 6h1v1h-1zM15 7h1v1h-1zM15 8h1v1h-1zM15 9h1v1h-1zM15 10h1v1h-1zM15 11h1v1h-1zM15 12h1v1h-1zM15 13h1v1h-1zM15 14h1v1h-1z" fill="#b4b4b4"/></svg>
<svg class="a" style="left:75px;top:265px" width="19" height="17" shape-rendering="crispEdges"><path d="M4 0h11v1h-11zM4 1h1v1h-1zM4 2h1v1h-1zM4 14h1v1h-1z" fill="#808080"/><path d="M5 1h9v1h-9zM5 2h10v1h-10zM13 3h2v1h-2zM1 4h3v1h-3zM5 4h3v1h-3zM9 4h2v1h-2zM13 4h2v1h-2zM13 5h2v1h-2zM1 6h3v1h-3zM5 6h3v1h-3zM9 6h2v1h-2zM13 6h2v1h-2zM1 7h3v1h-3zM5 7h3v1h-3zM9 7h2v1h-2zM13 7h2v1h-2zM13 8h2v1h-2zM1 9h3v1h-3zM5 9h3v1h-3zM9 9h2v1h-2zM13 9h2v1h-2zM13 10h2v1h-2zM1 11h3v1h-3zM5 11h3v1h-3zM9 11h2v1h-2zM13 11h2v1h-2zM1 12h3v1h-3zM5 12h3v1h-3zM9 12h2v1h-2zM13 12h2v1h-2zM13 13h2v1h-2zM5 14h10v1h-10z" fill="#fff"/><path d="M14 1h2v1h-2zM15 2h2v1h-2zM0 3h13v1h-13zM16 3h2v1h-2zM0 4h1v1h-1zM4 4h1v1h-1zM8 4h1v1h-1zM11 4h2v1h-2zM16 4h2v1h-2zM0 5h13v1h-13zM16 5h2v1h-2zM0 6h1v1h-1zM4 6h1v1h-1zM8 6h1v1h-1zM11 6h2v1h-2zM16 6h2v1h-2zM0 7h1v1h-1zM4 7h1v1h-1zM8 7h1v1h-1zM11 7h2v1h-2zM16 7h2v1h-2zM0 8h13v1h-13zM16 8h2v1h-2zM0 9h1v1h-1zM4 9h1v1h-1zM8 9h1v1h-1zM11 9h2v1h-2zM16 9h2v1h-2zM0 10h13v1h-13zM16 10h2v1h-2zM0 11h1v1h-1zM4 11h1v1h-1zM8 11h1v1h-1zM11 11h2v1h-2zM16 11h2v1h-2zM0 12h1v1h-1zM4 12h1v1h-1zM8 12h1v1h-1zM11 12h2v1h-2zM16 12h2v1h-2zM0 13h13v1h-13zM16 13h2v1h-2zM16 14h2v1h-2zM4 15h14v1h-14zM4 16h14v1h-14z" fill="#000"/><path d="M15 3h1v1h-1zM15 4h1v1h-1zM15 5h1v1h-1zM15 6h1v1h-1zM15 7h1v1h-1zM15 8h1v1h-1zM15 9h1v1h-1zM15 10h1v1h-1zM15 11h1v1h-1zM15 12h1v1h-1zM15 13h1v1h-1zM15 14h1v1h-1z" fill="#b4b4b4"/></svg>
<svg class="a" style="left:75px;top:285px" width="19" height="17" shape-rendering="crispEdges"><path d="M4 0h11v1h-11zM4 1h1v1h-1zM4 2h1v1h-1zM4 14h1v1h-1z" fill="#808080"/><path d="M5 1h9v1h-9zM5 2h10v1h-10zM13 3h2v1h-2zM1 4h3v1h-3zM5 4h3v1h-3zM9 4h2v1h-2zM13 4h2v1h-2zM13 5h2v1h-2zM1 6h3v1h-3zM5 6h3v1h-3zM9 6h2v1h-2zM13 6h2v1h-2zM1 7h3v1h-3zM5 7h3v1h-3zM9 7h2v1h-2zM13 7h2v1h-2zM13 8h2v1h-2zM1 9h3v1h-3zM5 9h3v1h-3zM9 9h2v1h-2zM13 9h2v1h-2zM13 10h2v1h-2zM1 11h3v1h-3zM5 11h3v1h-3zM9 11h2v1h-2zM13 11h2v1h-2zM1 12h3v1h-3zM5 12h3v1h-3zM9 12h2v1h-2zM13 12h2v1h-2zM13 13h2v1h-2zM5 14h10v1h-10z" fill="#fff"/><path d="M14 1h2v1h-2zM15 2h2v1h-2zM0 3h13v1h-13zM16 3h2v1h-2zM0 4h1v1h-1zM4 4h1v1h-1zM8 4h1v1h-1zM11 4h2v1h-2zM16 4h2v1h-2zM0 5h13v1h-13zM16 5h2v1h-2zM0 6h1v1h-1zM4 6h1v1h-1zM8 6h1v1h-1zM11 6h2v1h-2zM16 6h2v1h-2zM0 7h1v1h-1zM4 7h1v1h-1zM8 7h1v1h-1zM11 7h2v1h-2zM16 7h2v1h-2zM0 8h13v1h-13zM16 8h2v1h-2zM0 9h1v1h-1zM4 9h1v1h-1zM8 9h1v1h-1zM11 9h2v1h-2zM16 9h2v1h-2zM0 10h13v1h-13zM16 10h2v1h-2zM0 11h1v1h-1zM4 11h1v1h-1zM8 11h1v1h-1zM11 11h2v1h-2zM16 11h2v1h-2zM0 12h1v1h-1zM4 12h1v1h-1zM8 12h1v1h-1zM11 12h2v1h-2zM16 12h2v1h-2zM0 13h13v1h-13zM16 13h2v1h-2zM16 14h2v1h-2zM4 15h14v1h-14zM4 16h14v1h-14z" fill="#000"/><path d="M15 3h1v1h-1zM15 4h1v1h-1zM15 5h1v1h-1zM15 6h1v1h-1zM15 7h1v1h-1zM15 8h1v1h-1zM15 9h1v1h-1zM15 10h1v1h-1zM15 11h1v1h-1zM15 12h1v1h-1zM15 13h1v1h-1zM15 14h1v1h-1z" fill="#b4b4b4"/></svg>
<svg class="a" style="left:75px;top:305px" width="19" height="17" shape-rendering="crispEdges"><path d="M4 0h11v1h-11zM4 1h1v1h-1zM4 2h1v1h-1zM4 14h1v1h-1z" fill="#808080"/><path d="M5 1h9v1h-9zM5 2h10v1h-10zM13 3h2v1h-2zM1 4h3v1h-3zM5 4h3v1h-3zM9 4h2v1h-2zM13 4h2v1h-2zM13 5h2v1h-2zM1 6h3v1h-3zM5 6h3v1h-3zM9 6h2v1h-2zM13 6h2v1h-2zM1 7h3v1h-3zM5 7h3v1h-3zM9 7h2v1h-2zM13 7h2v1h-2zM13 8h2v1h-2zM1 9h3v1h-3zM5 9h3v1h-3zM9 9h2v1h-2zM13 9h2v1h-2zM13 10h2v1h-2zM1 11h3v1h-3zM5 11h3v1h-3zM9 11h2v1h-2zM13 11h2v1h-2zM1 12h3v1h-3zM5 12h3v1h-3zM9 12h2v1h-2zM13 12h2v1h-2zM13 13h2v1h-2zM5 14h10v1h-10z" fill="#fff"/><path d="M14 1h2v1h-2zM15 2h2v1h-2zM0 3h13v1h-13zM16 3h2v1h-2zM0 4h1v1h-1zM4 4h1v1h-1zM8 4h1v1h-1zM11 4h2v1h-2zM16 4h2v1h-2zM0 5h13v1h-13zM16 5h2v1h-2zM0 6h1v1h-1zM4 6h1v1h-1zM8 6h1v1h-1zM11 6h2v1h-2zM16 6h2v1h-2zM0 7h1v1h-1zM4 7h1v1h-1zM8 7h1v1h-1zM11 7h2v1h-2zM16 7h2v1h-2zM0 8h13v1h-13zM16 8h2v1h-2zM0 9h1v1h-1zM4 9h1v1h-1zM8 9h1v1h-1zM11 9h2v1h-2zM16 9h2v1h-2zM0 10h13v1h-13zM16 10h2v1h-2zM0 11h1v1h-1zM4 11h1v1h-1zM8 11h1v1h-1zM11 11h2v1h-2zM16 11h2v1h-2zM0 12h1v1h-1zM4 12h1v1h-1zM8 12h1v1h-1zM11 12h2v1h-2zM16 12h2v1h-2zM0 13h13v1h-13zM16 13h2v1h-2zM16 14h2v1h-2zM4 15h14v1h-14zM4 16h14v1h-14z" fill="#000"/><path d="M15 3h1v1h-1zM15 4h1v1h-1zM15 5h1v1h-1zM15 6h1v1h-1zM15 7h1v1h-1zM15 8h1v1h-1zM15 9h1v1h-1zM15 10h1v1h-1zM15 11h1v1h-1zM15 12h1v1h-1zM15 13h1v1h-1zM15 14h1v1h-1z" fill="#b4b4b4"/></svg>
<svg class="a" style="left:75px;top:325px" width="19" height="17" shape-rendering="crispEdges"><path d="M4 0h11v1h-11zM4 1h1v1h-1zM4 2h1v1h-1zM4 14h1v1h-1z" fill="#808080"/><path d="M5 1h9v1h-9zM5 2h10v1h-10zM13 3h2v1h-2zM1 4h3v1h-3zM5 4h3v1h-3zM9 4h2v1h-2zM13 4h2v1h-2zM13 5h2v1h-2zM1 6h3v1h-3zM5 6h3v1h-3zM9 6h2v1h-2zM13 6h2v1h-2zM1 7h3v1h-3zM5 7h3v1h-3zM9 7h2v1h-2zM13 7h2v1h-2zM13 8h2v1h-2zM1 9h3v1h-3zM5 9h3v1h-3zM9 9h2v1h-2zM13 9h2v1h-2zM13 10h2v1h-2zM1 11h3v1h-3zM5 11h3v1h-3zM9 11h2v1h-2zM13 11h2v1h-2zM1 12h3v1h-3zM5 12h3v1h-3zM9 12h2v1h-2zM13 12h2v1h-2zM13 13h2v1h-2zM5 14h10v1h-10z" fill="#fff"/><path d="M14 1h2v1h-2zM15 2h2v1h-2zM0 3h13v1h-13zM16 3h2v1h-2zM0 4h1v1h-1zM4 4h1v1h-1zM8 4h1v1h-1zM11 4h2v1h-2zM16 4h2v1h-2zM0 5h13v1h-13zM16 5h2v1h-2zM0 6h1v1h-1zM4 6h1v1h-1zM8 6h1v1h-1zM11 6h2v1h-2zM16 6h2v1h-2zM0 7h1v1h-1zM4 7h1v1h-1zM8 7h1v1h-1zM11 7h2v1h-2zM16 7h2v1h-2zM0 8h13v1h-13zM16 8h2v1h-2zM0 9h1v1h-1zM4 9h1v1h-1zM8 9h1v1h-1zM11 9h2v1h-2zM16 9h2v1h-2zM0 10h13v1h-13zM16 10h2v1h-2zM0 11h1v1h-1zM4 11h1v1h-1zM8 11h1v1h-1zM11 11h2v1h-2zM16 11h2v1h-2zM0 12h1v1h-1zM4 12h1v1h-1zM8 12h1v1h-1zM11 12h2v1h-2zM16 12h2v1h-2zM0 13h13v1h-13zM16 13h2v1h-2zM16 14h2v1h-2zM4 15h14v1h-14zM4 16h14v1h-14z" fill="#000"/><path d="M15 3h1v1h-1zM15 4h1v1h-1zM15 5h1v1h-1zM15 6h1v1h-1zM15 7h1v1h-1zM15 8h1v1h-1zM15 9h1v1h-1zM15 10h1v1h-1zM15 11h1v1h-1zM15 12h1v1h-1zM15 13h1v1h-1zM15 14h1v1h-1z" fill="#b4b4b4"/></svg>
<svg class="a" style="left:75px;top:345px" width="19" height="17" shape-rendering="crispEdges"><path d="M4 0h11v1h-11zM4 1h1v1h-1zM4 2h1v1h-1zM4 14h1v1h-1z" fill="#808080"/><path d="M5 1h9v1h-9zM5 2h10v1h-10zM13 3h2v1h-2zM1 4h3v1h-3zM5 4h3v1h-3zM9 4h2v1h-2zM13 4h2v1h-2zM13 5h2v1h-2zM1 6h3v1h-3zM5 6h3v1h-3zM9 6h2v1h-2zM13 6h2v1h-2zM1 7h3v1h-3zM5 7h3v1h-3zM9 7h2v1h-2zM13 7h2v1h-2zM13 8h2v1h-2zM1 9h3v1h-3zM5 9h3v1h-3zM9 9h2v1h-2zM13 9h2v1h-2zM13 10h2v1h-2zM1 11h3v1h-3zM5 11h3v1h-3zM9 11h2v1h-2zM13 11h2v1h-2zM1 12h3v1h-3zM5 12h3v1h-3zM9 12h2v1h-2zM13 12h2v1h-2zM13 13h2v1h-2zM5 14h10v1h-10z" fill="#fff"/><path d="M14 1h2v1h-2zM15 2h2v1h-2zM0 3h13v1h-13zM16 3h2v1h-2zM0 4h1v1h-1zM4 4h1v1h-1zM8 4h1v1h-1zM11 4h2v1h-2zM16 4h2v1h-2zM0 5h13v1h-13zM16 5h2v1h-2zM0 6h1v1h-1zM4 6h1v1h-1zM8 6h1v1h-1zM11 6h2v1h-2zM16 6h2v1h-2zM0 7h1v1h-1zM4 7h1v1h-1zM8 7h1v1h-1zM11 7h2v1h-2zM16 7h2v1h-2zM0 8h13v1h-13zM16 8h2v1h-2zM0 9h1v1h-1zM4 9h1v1h-1zM8 9h1v1h-1zM11 9h2v1h-2zM16 9h2v1h-2zM0 10h13v1h-13zM16 10h2v1h-2zM0 11h1v1h-1zM4 11h1v1h-1zM8 11h1v1h-1zM11 11h2v1h-2zM16 11h2v1h-2zM0 12h1v1h-1zM4 12h1v1h-1zM8 12h1v1h-1zM11 12h2v1h-2zM16 12h2v1h-2zM0 13h13v1h-13zM16 13h2v1h-2zM16 14h2v1h-2zM4 15h14v1h-14zM4 16h14v1h-14z" fill="#000"/><path d="M15 3h1v1h-1zM15 4h1v1h-1zM15 5h1v1h-1zM15 6h1v1h-1zM15 7h1v1h-1zM15 8h1v1h-1zM15 9h1v1h-1zM15 10h1v1h-1zM15 11h1v1h-1zM15 12h1v1h-1zM15 13h1v1h-1zM15 14h1v1h-1z" fill="#b4b4b4"/></svg>
<svg class="a" style="left:75px;top:365px" width="19" height="17" shape-rendering="crispEdges"><path d="M4 0h11v1h-11zM4 1h1v1h-1zM4 2h1v1h-1zM4 14h1v1h-1z" fill="#808080"/><path d="M5 1h9v1h-9zM5 2h10v1h-10zM13 3h2v1h-2zM1 4h3v1h-3zM5 4h3v1h-3zM9 4h2v1h-2zM13 4h2v1h-2zM13 5h2v1h-2zM1 6h3v1h-3zM5 6h3v1h-3zM9 6h2v1h-2zM13 6h2v1h-2zM1 7h3v1h-3zM5 7h3v1h-3zM9 7h2v1h-2zM13 7h2v1h-2zM13 8h2v1h-2zM1 9h3v1h-3zM5 9h3v1h-3zM9 9h2v1h-2zM13 9h2v1h-2zM13 10h2v1h-2zM1 11h3v1h-3zM5 11h3v1h-3zM9 11h2v1h-2zM13 11h2v1h-2zM1 12h3v1h-3zM5 12h3v1h-3zM9 12h2v1h-2zM13 12h2v1h-2zM13 13h2v1h-2zM5 14h10v1h-10z" fill="#fff"/><path d="M14 1h2v1h-2zM15 2h2v1h-2zM0 3h13v1h-13zM16 3h2v1h-2zM0 4h1v1h-1zM4 4h1v1h-1zM8 4h1v1h-1zM11 4h2v1h-2zM16 4h2v1h-2zM0 5h13v1h-13zM16 5h2v1h-2zM0 6h1v1h-1zM4 6h1v1h-1zM8 6h1v1h-1zM11 6h2v1h-2zM16 6h2v1h-2zM0 7h1v1h-1zM4 7h1v1h-1zM8 7h1v1h-1zM11 7h2v1h-2zM16 7h2v1h-2zM0 8h13v1h-13zM16 8h2v1h-2zM0 9h1v1h-1zM4 9h1v1h-1zM8 9h1v1h-1zM11 9h2v1h-2zM16 9h2v1h-2zM0 10h13v1h-13zM16 10h2v1h-2zM0 11h1v1h-1zM4 11h1v1h-1zM8 11h1v1h-1zM11 11h2v1h-2zM16 11h2v1h-2zM0 12h1v1h-1zM4 12h1v1h-1zM8 12h1v1h-1zM11 12h2v1h-2zM16 12h2v1h-2zM0 13h13v1h-13zM16 13h2v1h-2zM16 14h2v1h-2zM4 15h14v1h-14zM4 16h14v1h-14z" fill="#000"/><path d="M15 3h1v1h-1zM15 4h1v1h-1zM15 5h1v1h-1zM15 6h1v1h-1zM15 7h1v1h-1zM15 8h1v1h-1zM15 9h1v1h-1zM15 10h1v1h-1zM15 11h1v1h-1zM15 12h1v1h-1zM15 13h1v1h-1zM15 14h1v1h-1z" fill="#b4b4b4"/></svg>
<svg class="a" style="left:74px;top:384px" width="20" height="18" shape-rendering="crispEdges"><path d="M3 0h11v1h-11zM3 1h1v1h-1zM13 1h2v1h-2zM3 2h1v1h-1zM14 2h2v1h-2zM3 3h1v1h-1zM15 3h1v1h-1zM3 4h1v1h-1zM15 4h2v1h-2zM15 5h2v1h-2zM15 6h2v1h-2zM15 7h2v1h-2zM15 8h2v1h-2zM15 9h2v1h-2zM15 10h2v1h-2zM15 11h2v1h-2zM15 12h2v1h-2zM15 13h2v1h-2zM3 14h1v1h-1zM15 14h2v1h-2zM3 15h1v1h-1zM15 15h2v1h-2zM3 16h14v1h-14zM3 17h14v1h-14z" fill="#000"/><path d="M4 1h8v1h-8zM4 2h8v1h-8zM13 2h1v1h-1zM4 3h11v1h-11zM4 4h11v1h-11zM3 5h4v1h-4zM10 5h5v1h-5zM4 6h2v1h-2zM10 6h5v1h-5zM5 7h1v1h-1zM9 7h6v1h-6zM8 8h7v1h-7zM7 9h8v1h-8zM8 10h7v1h-7zM5 11h1v1h-1zM9 11h6v1h-6zM4 12h2v1h-2zM10 12h5v1h-5zM3 13h4v1h-4zM10 13h5v1h-5zM4 14h11v1h-11zM4 15h11v1h-11z" fill="#fff"/><path d="M12 1h1v1h-1zM12 2h1v1h-1z" fill="#b4b4b4"/><path d="M0 5h2v1h-2zM8 5h2v1h-2zM1 6h2v1h-2zM7 6h2v1h-2zM2 7h2v1h-2zM6 7h3v1h-3zM3 8h4v1h-4zM4 9h3v1h-3zM3 10h4v1h-4zM2 11h2v1h-2zM6 11h3v1h-3zM1 12h2v1h-2zM7 12h2v1h-2zM0 13h2v1h-2zM8 13h2v1h-2z" fill="#0f7a0f"/><path d="M2 5h1v1h-1zM7 5h1v1h-1zM0 6h1v1h-1zM3 6h1v1h-1zM6 6h1v1h-1zM9 6h1v1h-1zM1 7h1v1h-1zM4 7h1v1h-1zM2 8h1v1h-1zM7 8h1v1h-1zM3 9h1v1h-1zM2 10h1v1h-1zM7 10h1v1h-1zM1 11h1v1h-1zM4 11h1v1h-1zM0 12h1v1h-1zM3 12h1v1h-1zM6 12h1v1h-1zM9 12h1v1h-1zM2 13h1v1h-1zM7 13h1v1h-1z" fill="#8cc48c"/></svg>
<div class="a" style="left:97px;top:424px;width:52px;height:20px;background:#ececec"></div>
<svg class="a" style="left:74px;top:425px" width="20" height="15" shape-rendering="crispEdges"><path d="M8 0h3v1h-3zM15 0h2v1h-2zM7 1h1v1h-1zM10 1h1v1h-1zM14 1h1v1h-1zM17 1h1v1h-1zM7 2h1v1h-1zM10 2h1v1h-1zM14 2h1v1h-1zM18 2h1v1h-1zM6 3h1v1h-1zM9 3h1v1h-1zM14 3h1v1h-1zM17 3h2v1h-2zM6 4h3v1h-3zM10 4h1v1h-1zM12 4h5v1h-5zM5 5h2v1h-2zM11 5h3v1h-3zM4 6h2v1h-2zM11 6h2v1h-2zM3 7h2v1h-2zM10 7h1v1h-1zM12 7h2v1h-2zM1 8h4v1h-4zM6 8h5v1h-5zM14 8h2v1h-2zM0 9h1v1h-1zM4 9h2v1h-2zM10 9h1v1h-1zM15 9h2v1h-2zM0 10h1v1h-1zM5 10h1v1h-1zM11 10h1v1h-1zM16 10h3v1h-3zM0 11h1v1h-1zM4 11h2v1h-2zM10 11h1v1h-1zM13 11h3v1h-3zM18 11h1v1h-1zM1 12h1v1h-1zM3 12h2v1h-2zM6 12h4v1h-4zM14 12h1v1h-1zM19 12h1v1h-1zM2 13h2v1h-2zM14 13h2v1h-2zM18 13h1v1h-1zM15 14h3v1h-3z" fill="#000"/><path d="M8 1h2v1h-2zM8 2h2v1h-2zM7 3h2v1h-2z" fill="#ffff00"/><path d="M15 1h2v1h-2zM15 2h3v1h-3zM15 3h2v1h-2zM1 9h3v1h-3zM1 10h4v1h-4zM1 11h3v1h-3zM2 12h1v1h-1z" fill="#ff00ff"/><path d="M6 9h4v1h-4zM6 10h5v1h-5zM6 11h4v1h-4z" fill="#00ff00"/><path d="M16 11h2v1h-2zM15 12h4v1h-4zM16 13h2v1h-2z" fill="#00ffff"/></svg>
<div class="r b" style="left:52px;top:88px;letter-spacing:0.45px">VBAProject (4358-tai-lieu-vbag01.xlsm)</div>
<div class="r b" style="left:52px;top:108px;letter-spacing:-0.12px">VBAProject (BT VONG LAP FOR VA FOR Each.xlsm)</div>
<div class="r " style="left:75px;top:128px;">Microsoft Excel Objects</div>
<div class="r " style="left:98px;top:148px;">Sheet1 (Sheet1)</div>
<div class="r " style="left:98px;top:168px;">Sheet10 (Sheet10)</div>
<div class="r " style="left:98px;top:188px;">Sheet11 (Sheet11)</div>
<div class="r " style="left:98px;top:208px;">Sheet12 (Sheet12)</div>
<div class="r " style="left:98px;top:228px;">Sheet2 (Sheet2)</div>
<div class="r " style="left:98px;top:248px;">Sheet3 (Sheet3)</div>
<div class="r " style="left:98px;top:268px;">Sheet4 (Sheet4)</div>
<div class="r " style="left:98px;top:288px;">Sheet5 (Sheet5)</div>
<div class="r " style="left:98px;top:308px;">Sheet6 (Sheet6)</div>
<div class="r " style="left:98px;top:328px;">Sheet7 (Sheet7)</div>
<div class="r " style="left:98px;top:348px;">Sheet8 (Sheet8)</div>
<div class="r " style="left:98px;top:368px;">Sheet9 (Sheet9)</div>
<div class="r " style="left:98px;top:388px;">ThisWorkbook</div>
<div class="r " style="left:75px;top:408px;">Modules</div>
<div class="r " style="left:98px;top:428px;">Module1</div>
<div class="r b" style="left:52px;top:448px;letter-spacing:0.22px">VBAProject (Ufunctions.xla)</div>

<!-- PROPERTIES PANEL -->
<div class="cap" style="top:521px"><div class="capt" style="top:3px;letter-spacing:-0.5px">Properties - Module1</div></div>
<div class="xbtn" style="top:522px"><svg width="16" height="16" viewBox="0 0 16 16"><path d="M2 2L14 14M14 2L2 14" stroke="#000" stroke-width="3.3" stroke-linecap="square"/></svg></div>

<!-- PROPERTIES CONTENT -->
<div class="a" style="left:0;top:553px;width:458px;height:22px;background:#fff;border:1px solid #6e6e6e;border-left-color:#8a8a8a"></div>
<div class="t" style="left:4px;top:559px;font-size:12px;font-weight:bold;letter-spacing:0.5px">Module1</div>
<div class="t" style="left:63px;top:559px;font-size:12px;letter-spacing:0.2px">Module</div>
<div class="a" style="left:442px;top:562px"><svg width="10" height="6" viewBox="0 0 10 6"><path d="M0.5 0.5L5 5L9.5 0.5" fill="none" stroke="#404040" stroke-width="1.1"/></svg></div>
<div class="a" style="left:75px;top:581px;width:76px;height:22px;background:#f0f0f0;border:1px solid #d9d9d9;border-bottom:none"></div>
<div class="a" style="left:1px;top:579px;width:75px;height:24px;background:#fcfcfc;border:1px solid #d9d9d9;border-bottom:none"></div>
<div class="t" style="left:8px;top:584px;font-size:12px;letter-spacing:0.26px">Alphabetic</div>
<div class="t" style="left:79px;top:586px;font-size:12px;letter-spacing:0.3px">Categorized</div>
<div class="a" style="left:4px;top:603px;width:453px;height:165px;background:#fff;border-left:1px solid #a0a0a0;border-top:1px solid #a0a0a0;border-right:1px solid #e3e3e3"></div>
<div class="a" style="left:6px;top:605px;width:448px;height:163px;border-left:1px solid #696969;border-top:1px solid #696969;border-right:1px solid #a0a0a0"></div>
<div class="a" style="left:7px;top:606px;width:46px;height:18px;background:#f0f0f0"></div>
<div class="a" style="left:53px;top:606px;width:1px;height:19px;background:#c8c8c8"></div>
<div class="a" style="left:7px;top:624px;width:446px;height:1px;background:#c8c8c8"></div>
<div class="t" style="left:8px;top:609px;font-size:12px;letter-spacing:0.5px">(Name)</div>
<div class="t" style="left:56px;top:609px;font-size:12px;letter-spacing:0.15px">Module1</div>

<!-- CODE WINDOW -->
<div class="a" style="left:465px;top:19px;width:878px;height:749px;border-left:2px solid #7a7a7a;border-top:2px solid #7a7a7a;background:#f0f0f0"></div>
<div class="a" style="left:477px;top:23px;width:710px;height:24px;background:#fff;border:1px solid #7a7a7a"></div>
<div class="a" style="left:1197px;top:23px;width:146px;height:24px;background:#fff;border:1px solid #7a7a7a;border-right:none"></div>
<div class="t" style="left:481px;top:28px;font-size:13px;font-weight:bold;letter-spacing:0.1px">(General)</div>
<div class="a" style="left:1172px;top:33px"><svg width="10" height="6" viewBox="0 0 10 6"><path d="M0.5 0.5L5 5L9.5 0.5" fill="none" stroke="#404040" stroke-width="1.1"/></svg></div>
<div class="t" style="left:1201px;top:28px;font-size:13px;font-weight:bold;letter-spacing:0.05px">LoiNhuan_ForNext</div>
<div class="a" style="left:467px;top:49px;width:876px;height:719px;border-left:1px solid #a0a0a0;border-top:1px solid #a0a0a0;background:#fff"></div>
<div class="a" style="left:468px;top:50px;width:875px;height:718px;border-left:1px solid #696969;border-top:1px solid #696969"></div>
<div class="a" style="left:469px;top:51px;width:26px;height:717px;background:#f0f0f0;border-right:1px solid #000"></div>

<div class="cl" id="cl0" style="left:506.00px;top:56px;letter-spacing:1.195px"><span class="k">Sub</span> LoiNhuan_ForNext<span class="p">()</span></div>
<div class="cl" id="cl1" style="left:555.00px;top:76px;letter-spacing:0.989px"><span class="k">Dim</span> VDTBD <span class="k">As</span> <span class="k">Double</span></div>
<div class="cl" id="cl2" style="left:797.00px;top:76px;letter-spacing:1.322px"><span class="c">&#x27;Von dau tu ban dau</span></div>
<div class="cl" id="cl3" style="left:555.00px;top:96px;letter-spacing:0.784px"><span class="k">Dim</span> CPBDSP <span class="k">As</span> <span class="k">Double</span></div>
<div class="cl" id="cl4" style="left:794.00px;top:96px;letter-spacing:1.232px"><span class="c">&#x27;Chi phí bien doi theo moi san pham</span></div>
<div class="cl" id="cl5" style="left:555.00px;top:116px;letter-spacing:1.047px"><span class="k">Dim</span> DonGia <span class="k">As</span> <span class="k">Double</span></div>
<div class="cl" id="cl6" style="left:792.80px;top:116px;letter-spacing:1.183px"><span class="c">&#x27;Gia ban 1 san pham</span></div>
<div class="cl" id="cl7" style="left:555.00px;top:136px;letter-spacing:1.075px"><span class="k">Dim</span> SoLuong <span class="k">As</span> <span class="k">Double</span></div>
<div class="cl" id="cl8" style="left:805.40px;top:136px;letter-spacing:0.912px"><span class="c">&#x27;So Luong</span></div>
<div class="cl" id="cl9" style="left:555.00px;top:156px;letter-spacing:1.100px"><span class="k">Dim</span> DoanThu <span class="k">As</span> <span class="k">Double</span></div>
<div class="cl" id="cl10" style="left:807.40px;top:156px;letter-spacing:0.975px"><span class="c">&#x27;Doan Thu</span></div>
<div class="cl" id="cl11" style="left:555.00px;top:176px;letter-spacing:1.078px"><span class="k">Dim</span> TongChiPhi <span class="k">As</span> <span class="k">Double</span></div>
<div class="cl" id="cl12" style="left:809.00px;top:176px;letter-spacing:1.350px"><span class="c">&#x27;Tong chi phi</span></div>
<div class="cl" id="cl13" style="left:555.00px;top:196px;letter-spacing:1.100px"><span class="k">Dim</span> i <span class="k">As</span> <span class="k">Long</span></div>
<div class="cl" id="cl14" style="left:813.20px;top:196px;letter-spacing:1.017px"><span class="c">&#x27;Bien i</span></div>
<div class="cl" id="cl15" style="left:507.00px;top:256px;letter-spacing:1.100px"><span class="c">&#x27;Lay cac gia tri co dinh</span></div>
<div class="cl" id="cl16" style="left:556.00px;top:276px;letter-spacing:1.197px">VDTBD <span class="p">=</span> Sheet1<span class="p">.</span>Range<span class="p">(&quot;D1&quot;).</span>Value</div>
<div class="cl" id="cl17" style="left:556.00px;top:296px;letter-spacing:1.053px">CPBDSP <span class="p">=</span> Sheet1<span class="p">.</span>Range<span class="p">(&quot;D2&quot;).</span>Value</div>
<div class="cl" id="cl18" style="left:519.00px;top:336px;letter-spacing:1.207px"><span class="c">&#x27;Tinh dong cuoi</span></div>
<div class="cl" id="cl19" style="left:577.80px;top:356px;letter-spacing:1.074px"><span class="k">Dim</span> DongCuoi <span class="k">As</span> <span class="k">Long</span></div>
<div class="cl" id="cl20" style="left:578.80px;top:376px;letter-spacing:1.158px">DongCuoi <span class="p">=</span> Sheet1<span class="p">.</span>Cells<span class="p">(</span>Sheet1<span class="p">.</span>Rows<span class="p">.</span>Count<span class="p">,</span> <span class="p">&quot;A&quot;).</span><span class="k">End</span><span class="p">(</span>xlUp<span class="p">).</span>Row</div>
<div class="cl" id="cl21" style="left:507.00px;top:416px;letter-spacing:1.238px"><span class="c">&#x27;Duyet qua cac hang tu hang 9 den hang cuoi cung</span></div>
<div class="cl" id="cl22" style="left:555.00px;top:436px;letter-spacing:1.150px"><span class="k">For</span> i <span class="p">=</span> <span class="p">9</span> <span class="k">To</span> DongCuoi</div>
<div class="cl" id="cl23" style="left:513.20px;top:476px;letter-spacing:1.025px"><span class="c">&#x27; Gia ban va so luong</span></div>
<div class="cl" id="cl24" style="left:554.60px;top:496px;letter-spacing:1.247px">DonGia <span class="p">=</span> Sheet1<span class="p">.</span>Cells<span class="p">(</span>i<span class="p">,</span> <span class="p">&quot;A&quot;).</span>Value</div>
<div class="cl" id="cl25" style="left:554.20px;top:516px;letter-spacing:1.272px">SoLuong <span class="p">=</span> Sheet1<span class="p">.</span>Cells<span class="p">(</span>i<span class="p">,</span> <span class="p">&quot;B&quot;)</span></div>
<div class="cl" id="cl26" style="left:507.80px;top:556px;letter-spacing:1.225px"><span class="c">&#x27;Tinh toan theo cong thuc</span></div>
<div class="cl" id="cl27" style="left:578.80px;top:576px;letter-spacing:1.100px">DoanhThu <span class="p">=</span> SoLuong <span class="p">*</span> DonGia</div>
<div class="cl" id="cl28" style="left:578.40px;top:596px;letter-spacing:0.989px">TongChiPhi <span class="p">=</span> SoLuong <span class="p">*</span> CPBDSP <span class="p">+</span> VDTBD</div>
<div class="cl" id="cl29" style="left:531.40px;top:616px;letter-spacing:1.078px"><span class="c">&#x27;Ghi loi nhuan vao cot C</span></div>
<div class="cl" id="cl30" style="left:578.80px;top:636px;letter-spacing:1.170px">Sheet1<span class="p">.</span>Cells<span class="p">(</span>i<span class="p">,</span> <span class="p">&quot;C&quot;)</span> <span class="p">=</span> DoanhThu <span class="p">-</span> TongChiPhi</div>
<div class="cl" id="cl31" style="left:530.40px;top:656px;letter-spacing:1.400px"><span class="k">Next</span> i</div>
<div class="cl" id="cl32" style="left:530.40px;top:676px;letter-spacing:1.227px">MsgBox <span class="p">&quot;Hoan tat tinh toan Loi nhuan bang ham For Next!&quot;</span></div>
<div class="cl" id="cl33" style="left:506.00px;top:696px;letter-spacing:1.183px"><span class="k">End</span> <span class="k">Sub</span></div>
<div class="a" style="left:530px;top:233px;width:1px;height:20px;background:#000"></div>
</body></html>
